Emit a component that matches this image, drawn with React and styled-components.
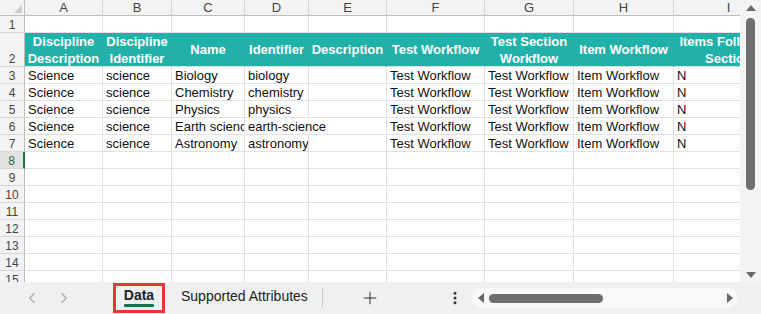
import React from 'react';
import styled, { createGlobalStyle } from 'styled-components';
import { ChevronLeft, ChevronRight, Plus, EllipsisVertical } from 'lucide-react';

const Global = createGlobalStyle`
  html, body { margin: 0; padding: 0; background: #fff; }
  body { font-family: "Liberation Sans", Arial, sans-serif; }
  * { box-sizing: border-box; }
`;

const COLS = [25, 78, 69, 73, 64, 78, 98, 89, 100, 110];
const LETTERS = ['A', 'B', 'C', 'D', 'E', 'F', 'G', 'H', 'I'];

const HEADERS = [
  'Discipline\nDescription',
  'Discipline\nIdentifier',
  'Name',
  'Identifier',
  'Description',
  'Test Workflow',
  'Test Section\nWorkflow',
  'Item Workflow',
  'Items Following\nSection',
];

const ROWS = [
  ['Science', 'science', 'Biology', 'biology', '', 'Test Workflow', 'Test Workflow', 'Item Workflow', 'N'],
  ['Science', 'science', 'Chemistry', 'chemistry', '', 'Test Workflow', 'Test Workflow', 'Item Workflow', 'N'],
  ['Science', 'science', 'Physics', 'physics', '', 'Test Workflow', 'Test Workflow', 'Item Workflow', 'N'],
  ['Science', 'science', 'Earth science', 'earth-science', '', 'Test Workflow', 'Test Workflow', 'Item Workflow', 'N'],
  ['Science', 'science', 'Astronomy', 'astronomy', '', 'Test Workflow', 'Test Workflow', 'Item Workflow', 'N'],
];

const Window = styled.div`
  width: 761px;
  height: 314px;
  display: flex;
  flex-direction: column;
  overflow: hidden;
  background: #fff;
`;

const SheetArea = styled.div`
  display: flex;
  height: 282px;
`;

const Grid = styled.div`
  flex: 1;
  min-width: 0;
  overflow: hidden;
  display: grid;
  grid-template-columns: ${COLS.map((c) => c + 'px').join(' ')};
  grid-template-rows: 16px 17px 34px repeat(13, 17px);
  align-content: start;
  background: #fff;
`;

const Corner = styled.div`
  background: #f3f3f3;
  border-right: 1px solid #bdbdbd;
  border-bottom: 1px solid #bdbdbd;
  display: flex;
  justify-content: flex-end;
  align-items: flex-end;
  padding: 0 2px 2px 0;
`;

const CornerMark = styled.div`
  width: 0;
  height: 0;
  border-left: 8px solid transparent;
  border-bottom: 8px solid #cdcdcd;
`;

const ColHead = styled.div`
  background: #f3f3f3;
  border-right: 1px solid #d6d6d6;
  border-bottom: 1px solid #bdbdbd;
  color: #444;
  font-size: 13px;
  line-height: 15px;
  text-align: center;
  overflow: hidden;
`;

const RowHead = styled.div`
  background: ${(p) => (p.$selected ? '#e1e1e1' : '#f3f3f3')};
  border-right: ${(p) => (p.$selected ? '2px solid #217346' : '1px solid #bdbdbd')};
  border-bottom: 1px solid #d6d6d6;
  color: ${(p) => (p.$selected ? '#1e7145' : '#444')};
  font-size: 12px;
  line-height: 14px;
  display: flex;
  align-items: flex-end;
  justify-content: center;
`;

const HeadCell = styled.div`
  background: #21b1a8;
  border-right: 1px solid #21b1a8;
  border-bottom: 1px solid #e1e1e1;
  color: #fff;
  font-weight: bold;
  font-size: 13px;
  line-height: 17px;
  white-space: pre;
  text-align: center;
  display: flex;
  align-items: center;
  justify-content: center;
  overflow: hidden;
`;

const Cell = styled.div`
  border-right: 1px solid ${(p) => (p.$spill ? 'transparent' : '#e1e1e1')};
  border-bottom: 1px solid #e1e1e1;
  color: #111;
  font-size: 13px;
  line-height: 14px;
  white-space: nowrap;
  display: flex;
  align-items: flex-end;
  padding: 0 0 0 3px;
  overflow: ${(p) => (p.$spill ? 'visible' : 'hidden')};
`;

const VScroll = styled.div`
  width: 21px;
  background: #f4f4f4;
  display: flex;
  flex-direction: column;
  align-items: center;
  padding-top: 5px;
`;

const UpArrow = styled.div`
  width: 0;
  height: 0;
  border-left: 5px solid transparent;
  border-right: 5px solid transparent;
  border-bottom: 6px solid #6a6a6a;
  margin-bottom: 7px;
`;

const DownArrow = styled.div`
  width: 0;
  height: 0;
  border-left: 5px solid transparent;
  border-right: 5px solid transparent;
  border-top: 6px solid #6a6a6a;
  margin-bottom: 4px;
`;

const VThumb = styled.div`
  width: 9px;
  height: 172px;
  border-radius: 5px;
  background: #6e6e6e;
`;

const Spacer = styled.div`
  flex: 1;
`;

const TabBar = styled.div`
  height: 32px;
  background: #f0f0f0;
  display: flex;
  align-items: center;
  padding-left: 22px;
`;

const NavButton = styled.div`
  width: 20px;
  display: flex;
  justify-content: center;
  color: #a8a8a8;
  margin-right: ${(p) => p.$gap || 0}px;
`;

const ActiveTab = styled.div`
  margin-left: 39px;
  width: 52px;
  height: 30px;
  border: 3px solid #e53935;
  display: flex;
  flex-direction: column;
  align-items: center;
  padding-top: 1px;
`;

const TabLabel = styled.span`
  font-size: 14px;
  line-height: 16px;
  font-weight: ${(p) => (p.$active ? 'bold' : 'normal')};
  color: #222;
`;

const TabUnderline = styled.div`
  width: 30px;
  height: 3px;
  background: #1e7145;
  margin-top: 1px;
  border-radius: 1px;
`;

const Tab = styled.div`
  margin-left: 16px;
  display: flex;
  align-items: center;
  padding-bottom: 4px;
`;

const Separator = styled.div`
  width: 1px;
  height: 18px;
  background: #c8c8c8;
  margin-left: 14px;
`;

const IconButton = styled.div`
  display: flex;
  align-items: center;
  color: #333;
  margin-left: ${(p) => p.$ml}px;
`;

const HScroll = styled.div`
  margin-left: 9px;
  width: 266px;
  height: 20px;
  background: #f9f9f9;
  border-radius: 10px;
  display: flex;
  align-items: center;
  padding: 0 5px 0 6px;
`;

const LeftArrow = styled.div`
  width: 0;
  height: 0;
  border-top: 5px solid transparent;
  border-bottom: 5px solid transparent;
  border-right: 6px solid #666;
`;

const RightArrow = styled.div`
  width: 0;
  height: 0;
  border-top: 5px solid transparent;
  border-bottom: 5px solid transparent;
  border-left: 6px solid #666;
`;

const HThumb = styled.div`
  margin-left: 5px;
  width: 114px;
  height: 9px;
  border-radius: 5px;
  background: #6e6e6e;
`;

export default function App() {
  const rowCount = 15;
  const cells = [];

  cells.push(
    <Corner key="corner">
      <CornerMark />
    </Corner>
  );
  LETTERS.forEach((l) => cells.push(<ColHead key={'h' + l}>{l}</ColHead>));

  for (let r = 1; r <= rowCount; r++) {
    cells.push(
      <RowHead key={'r' + r} $selected={r === 8}>
        {r}
      </RowHead>
    );
    if (r === 2) {
      HEADERS.forEach((h, i) => cells.push(<HeadCell key={'hc' + i}>{h}</HeadCell>));
    } else {
      const data = r >= 3 && r <= 7 ? ROWS[r - 3] : null;
      LETTERS.forEach((l, i) => {
        const v = data ? data[i] : '';
        const spill = data && i === 3 && data[4] === '' && v.length > 9;
        cells.push(
          <Cell key={l + r} $spill={spill}>
            {v}
          </Cell>
        );
      });
    }
  }

  return (
    <>
      <Global />
      <Window>
        <SheetArea>
          <Grid>{cells}</Grid>
          <VScroll>
            <UpArrow />
            <VThumb />
            <Spacer />
            <DownArrow />
          </VScroll>
        </SheetArea>
        <TabBar>
          <NavButton $gap={12}>
            <ChevronLeft size={18} strokeWidth={1.5} />
          </NavButton>
          <NavButton>
            <ChevronRight size={18} strokeWidth={1.5} />
          </NavButton>
          <ActiveTab>
            <TabLabel $active>Data</TabLabel>
            <TabUnderline />
          </ActiveTab>
          <Tab>
            <TabLabel>Supported Attributes</TabLabel>
          </Tab>
          <Separator />
          <IconButton $ml={37}>
            <Plus size={20} strokeWidth={1.2} />
          </IconButton>
          <IconButton $ml={67}>
            <EllipsisVertical size={16} strokeWidth={2.5} />
          </IconButton>
          <HScroll>
            <LeftArrow />
            <HThumb />
            <Spacer />
            <RightArrow />
          </HScroll>
        </TabBar>
      </Window>
    </>
  );
}
